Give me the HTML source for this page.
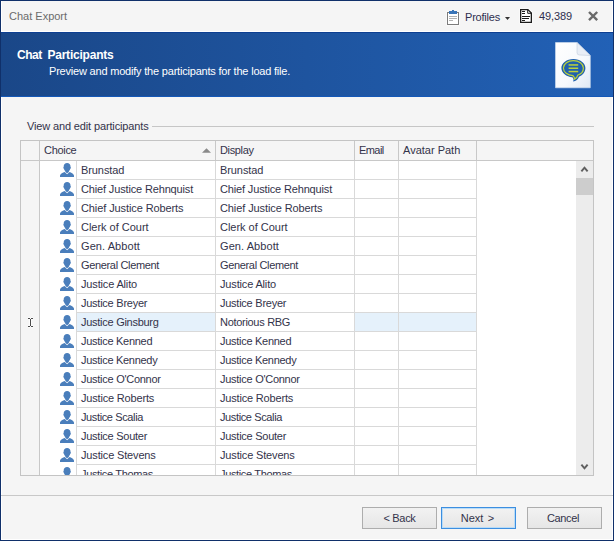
<!DOCTYPE html>
<html><head><meta charset="utf-8"><title>Chat Export</title>
<style>
*{box-sizing:border-box;margin:0;padding:0}
html,body{width:614px;height:541px;overflow:hidden;background:#f5f5f5}
body{position:relative;font-family:"Liberation Sans",Arial,sans-serif;font-size:11px;color:#33334a}
#win{position:absolute;left:0;top:0;width:614px;height:541px;border:1px solid #10306a;background:#f5f5f5;overflow:hidden}
#inner{position:absolute;left:0;top:0;width:612px;height:539px;border:1px solid #fff;border-top:none}
.abs{position:absolute;white-space:nowrap}
#title{left:8px;top:8px;font-size:11px;color:#6b6b6b;letter-spacing:0;line-height:15px}
#banner{position:absolute;left:0;top:31px;width:612px;height:65px;background:linear-gradient(90deg,#1a4788 0%,#2261b6 100%);border-top:1px solid #0d3f92;border-bottom:1px solid #1458b8}
#whiteline{position:absolute;left:0;top:30px;width:612px;height:1px;background:#fff}
#h1{left:16px;top:47px;font-size:12px;font-weight:bold;color:#fff;letter-spacing:-0.22px;line-height:14px}
#h2{left:48px;top:63px;font-size:11px;color:#fff;letter-spacing:-0.2px;line-height:14px}
#grp{left:26px;top:118px;font-size:11px;letter-spacing:-0.14px;line-height:14px;color:#33334a}
#grpline{position:absolute;left:151px;top:125px;width:442px;height:1px;background:#c6c6c6}
#grid{position:absolute;left:19px;top:139px;width:574px;height:336px;border:1px solid #c4c4c4;background:#fff;overflow:hidden}
#hdr{position:absolute;left:0;top:0;width:572px;height:20px;background:#f5f5f5;border-bottom:1px solid #c8c8c8}
.hc{position:absolute;top:0;height:19px;border-right:1px solid #c8c8c8;line-height:19px;padding-left:4px;white-space:nowrap;letter-spacing:-0.3px}
#ind{position:absolute;left:0;top:20px;width:19px;height:320px;background:#f5f5f5;border-right:1px solid #c8c8c8}
.row{position:absolute;left:19px;height:19px;width:437px}
.row .pi{position:absolute;left:20px;top:2px}
.c{position:absolute;top:0;height:19px;border-right:1px solid #d9d9d9;border-bottom:1px solid #d9d9d9;line-height:18px;padding-left:4px;white-space:nowrap;letter-spacing:-0.2px;overflow:hidden}
.c1{left:36px;width:140px;border-left:1px solid #d9d9d9;padding-left:4px}
.c2{left:176px;width:139px}
.c3{left:315px;width:44px}
.c4{left:359px;width:78px}
.sel .c1,.sel .c3,.sel .c4{background:#e5f1fb}
#sb{position:absolute;left:555px;top:20px;width:17px;height:314px;background:#ececec}
#thumb{position:absolute;left:0;top:17px;width:17px;height:17px;background:#cdcdcd}
#sep{position:absolute;left:0;top:494px;width:612px;height:1px;background:#c8c8c8}
.btn{position:absolute;top:506px;width:75px;height:22px;border:1px solid #adadad;background:linear-gradient(#f2f2f2,#e6e6e6);text-align:center;line-height:20px;font-size:11px;color:#33334a;letter-spacing:-0.3px}
#bnext{border-color:#3c8ee0;box-shadow:inset 0 0 0 1px #b9dcf7}
</style></head><body>
<div id="win"><div id="inner"></div>
<div id="title" class="abs">Chat Export</div>

<svg class="abs" style="left:445px;top:8px" width="14" height="17" viewBox="-1 -1 14 17">
<rect x="-0.6" y="1.4" width="13.2" height="14.2" fill="#fff" opacity="0.9"/>
<rect x="0.5" y="2.5" width="11" height="12" fill="#fff" stroke="#7c7c7c"/>
<rect x="2" y="1" width="8" height="3" fill="#3a75b8"/><rect x="5" y="0" width="2" height="1" fill="#3a75b8"/>
<rect x="2" y="6" width="8" height="1" fill="#b2b2b2"/><rect x="2" y="8" width="8" height="1" fill="#b2b2b2"/><rect x="2" y="10" width="4" height="1" fill="#b2b2b2"/>
</svg>
<div class="abs" style="left:464px;top:9px;font-size:11px;letter-spacing:-0.2px;line-height:15px;color:#2e2e4e">Profiles</div>
<svg class="abs" style="left:504px;top:16px" width="5" height="3" viewBox="0 0 5 3"><path d="M0 0H5L2.500 3Z" fill="#333"/></svg>
<svg class="abs" style="left:518px;top:7px" width="14" height="16" viewBox="-1 -1 14 16">
<path d="M-0.500 -0.500H9L12.500 3V14.500H-0.500Z" fill="#fff" opacity="0.9"/>
<path d="M0.650 0.650H7.900L11.350 4.100V13.350H0.650Z" fill="#fff" stroke="#1c1c1c" stroke-width="1.300"/>
<path d="M7.700 0.650V4.300H11.350" fill="none" stroke="#1c1c1c" stroke-width="1"/>
<rect x="2" y="2" width="3" height="1" fill="#1c1c1c"/><rect x="2" y="4" width="3" height="1" fill="#1c1c1c"/>
<rect x="2" y="7" width="8" height="1" fill="#1c1c1c"/><rect x="2" y="9" width="7" height="1" fill="#1c1c1c"/><rect x="2" y="11" width="3" height="1" fill="#1c1c1c"/>
</svg>
<div class="abs" style="left:538px;top:8px;font-size:11px;letter-spacing:-0.1px;line-height:15px;color:#2e2e4e">49,389</div>
<svg class="abs" style="left:586px;top:9px" width="12" height="12" viewBox="0 0 12 12"><path d="M2 2L10.200 10.200M10.200 2L2 10.200" stroke="#6a6a6a" stroke-width="2.400" fill="none"/></svg>

<div id="whiteline"></div>
<div id="banner"></div>
<div id="h1" class="abs" style="word-spacing:-0.3px"><span style="letter-spacing:-0.47px">Chat</span>&nbsp; Participants</div>
<div id="h2" class="abs">Preview and modify the participants for the load file.</div>

<svg class="abs" style="left:553px;top:40px" width="38" height="48" viewBox="0 0 38 48">
<defs><linearGradient id="dg" x1="0" y1="0" x2="1" y2="1"><stop offset="0" stop-color="#ffffff"/><stop offset="0.6" stop-color="#f6f9fd"/><stop offset="1" stop-color="#dfe8f4"/></linearGradient></defs>
<path d="M1.500 1.500H23L36.300 14.500V46.800H1.500Z" fill="url(#dg)" stroke="#d5e0f0" stroke-width="0.600"/>
<path d="M23 1.500V11.500Q23 14 25.500 14L36.300 14.500Z" fill="#e9eef6" stroke="#b9c4d6" stroke-width="0.500"/>
<g transform="translate(0.400,0.900)">
<path d="M19 17C12.300 17 7 21 7 26.200 7 31 12 35 18 35.400 19.200 36.600 19.600 38 18.600 39.600 21.600 39.400 23.800 37.500 24.600 34.800 28.600 33.400 31 30 31 26.200 31 21 25.700 17 19 17Z" fill="#2161ad"/>
<path d="M19 18.700C13.500 18.700 9 22 9 26.200 9 30.300 13.200 33.500 18.600 33.800 19.800 34.800 20.400 36 20.200 37.200 21.800 36.600 22.800 35.200 23.200 33.400 26.800 32.300 29 29.500 29 26.200 29 22 24.500 18.700 19 18.700Z" fill="none" stroke="#bdd23a" stroke-width="1.200"/>
<rect x="14.200" y="22.300" width="9.600" height="1.500" fill="#bdd23a"/><rect x="14.200" y="25.600" width="9.600" height="1.500" fill="#bdd23a"/><rect x="14.200" y="28.900" width="9.600" height="1.500" fill="#bdd23a"/>
</g>
</svg>

<div id="grp" class="abs">View and edit participants</div>
<div id="grpline"></div>

<div id="grid">
 <div id="hdr">
  <div class="hc" style="left:0;width:19px"></div>
  <div class="hc" style="left:19px;width:176px">Choice<svg style="position:absolute;left:162px;top:7px" width="9" height="5" viewBox="0 0 9 5"><path d="M0 4.700L4.500 0.300 9 4.700Z" fill="#8a8a8a"/></svg></div>
  <div class="hc" style="left:195px;width:139px;letter-spacing:-0.35px">Display</div>
  <div class="hc" style="left:334px;width:44px;letter-spacing:-0.58px">Email</div>
  <div class="hc" style="left:378px;width:78px;letter-spacing:0">Avatar Path</div>
 </div>
 <div id="ind"><svg style="position:absolute;left:6px;top:156px" width="7" height="11" viewBox="-1 -1 7 11"><path d="M0 0.500H2M3 0.500H5M0 8.500H2M3 8.500H5M2.500 1V8" stroke="#fff" stroke-width="2.600" fill="none" opacity="0.8"/><path d="M0 0.500H2M3 0.500H5M0 8.500H2M3 8.500H5M2.500 1V8" stroke="#4d4d4d" stroke-width="1" fill="none"/></svg></div>
<div class="row" style="top:20px"><svg class="pi" width="14" height="14" viewBox="0 0 14 14"><path d="M7.100 0C5 0 3.700 1.300 3.700 3.200L3.700 4C3.400 4 3.250 4.400 3.350 4.900 3.450 5.400 3.650 5.650 3.900 5.650 4.100 6.800 4.700 7.600 5.300 8.100L5.300 8.900 7.100 10.300 8.900 8.900 8.900 8.100C9.500 7.600 10.100 6.800 10.300 5.650 10.550 5.650 10.750 5.400 10.850 4.900 10.950 4.400 10.800 4 10.500 4L10.500 3.200C10.500 1.300 9.200 0 7.100 0Z" fill="#4a7ebb"/><path d="M4.600 9.050L7.100 11.150 9.600 9.050C11 9.550 13.600 10.500 14 12.500L14 14 0 14 0 12.500C0.400 10.500 3 9.550 4.600 9.050Z" fill="#4a7ebb"/></svg><div class="c c1"><span style="letter-spacing:-0.09px">Brunstad</span></div><div class="c c2"><span style="letter-spacing:-0.09px">Brunstad</span></div><div class="c c3"></div><div class="c c4"></div></div>
<div class="row" style="top:39px"><svg class="pi" width="14" height="14" viewBox="0 0 14 14"><path d="M7.100 0C5 0 3.700 1.300 3.700 3.200L3.700 4C3.400 4 3.250 4.400 3.350 4.900 3.450 5.400 3.650 5.650 3.900 5.650 4.100 6.800 4.700 7.600 5.300 8.100L5.300 8.900 7.100 10.300 8.900 8.900 8.900 8.100C9.500 7.600 10.100 6.800 10.300 5.650 10.550 5.650 10.750 5.400 10.850 4.900 10.950 4.400 10.800 4 10.500 4L10.500 3.200C10.500 1.300 9.200 0 7.100 0Z" fill="#4a7ebb"/><path d="M4.600 9.050L7.100 11.150 9.600 9.050C11 9.550 13.600 10.500 14 12.500L14 14 0 14 0 12.500C0.400 10.500 3 9.550 4.600 9.050Z" fill="#4a7ebb"/></svg><div class="c c1"><span style="letter-spacing:-0.15px">Chief Justice Rehnquist</span></div><div class="c c2"><span style="letter-spacing:-0.15px">Chief Justice Rehnquist</span></div><div class="c c3"></div><div class="c c4"></div></div>
<div class="row" style="top:58px"><svg class="pi" width="14" height="14" viewBox="0 0 14 14"><path d="M7.100 0C5 0 3.700 1.300 3.700 3.200L3.700 4C3.400 4 3.250 4.400 3.350 4.900 3.450 5.400 3.650 5.650 3.900 5.650 4.100 6.800 4.700 7.600 5.300 8.100L5.300 8.900 7.100 10.300 8.900 8.900 8.900 8.100C9.500 7.600 10.100 6.800 10.300 5.650 10.550 5.650 10.750 5.400 10.850 4.900 10.950 4.400 10.800 4 10.500 4L10.500 3.200C10.500 1.300 9.200 0 7.100 0Z" fill="#4a7ebb"/><path d="M4.600 9.050L7.100 11.150 9.600 9.050C11 9.550 13.600 10.500 14 12.500L14 14 0 14 0 12.500C0.400 10.500 3 9.550 4.600 9.050Z" fill="#4a7ebb"/></svg><div class="c c1"><span style="letter-spacing:-0.1px">Chief Justice Roberts</span></div><div class="c c2"><span style="letter-spacing:-0.1px">Chief Justice Roberts</span></div><div class="c c3"></div><div class="c c4"></div></div>
<div class="row" style="top:77px"><svg class="pi" width="14" height="14" viewBox="0 0 14 14"><path d="M7.100 0C5 0 3.700 1.300 3.700 3.200L3.700 4C3.400 4 3.250 4.400 3.350 4.900 3.450 5.400 3.650 5.650 3.900 5.650 4.100 6.800 4.700 7.600 5.300 8.100L5.300 8.900 7.100 10.300 8.900 8.900 8.900 8.100C9.500 7.600 10.100 6.800 10.300 5.650 10.550 5.650 10.750 5.400 10.850 4.900 10.950 4.400 10.800 4 10.500 4L10.500 3.200C10.500 1.300 9.200 0 7.100 0Z" fill="#4a7ebb"/><path d="M4.600 9.050L7.100 11.150 9.600 9.050C11 9.550 13.600 10.500 14 12.500L14 14 0 14 0 12.500C0.400 10.500 3 9.550 4.600 9.050Z" fill="#4a7ebb"/></svg><div class="c c1"><span style="letter-spacing:-0.02px">Clerk of Court</span></div><div class="c c2"><span style="letter-spacing:-0.02px">Clerk of Court</span></div><div class="c c3"></div><div class="c c4"></div></div>
<div class="row" style="top:96px"><svg class="pi" width="14" height="14" viewBox="0 0 14 14"><path d="M7.100 0C5 0 3.700 1.300 3.700 3.200L3.700 4C3.400 4 3.250 4.400 3.350 4.900 3.450 5.400 3.650 5.650 3.900 5.650 4.100 6.800 4.700 7.600 5.300 8.100L5.300 8.900 7.100 10.300 8.900 8.900 8.900 8.100C9.500 7.600 10.100 6.800 10.300 5.650 10.550 5.650 10.750 5.400 10.850 4.900 10.950 4.400 10.800 4 10.500 4L10.500 3.200C10.500 1.300 9.200 0 7.100 0Z" fill="#4a7ebb"/><path d="M4.600 9.050L7.100 11.150 9.600 9.050C11 9.550 13.600 10.500 14 12.500L14 14 0 14 0 12.500C0.400 10.500 3 9.550 4.600 9.050Z" fill="#4a7ebb"/></svg><div class="c c1"><span style="letter-spacing:0.08px">Gen. Abbott</span></div><div class="c c2"><span style="letter-spacing:0.08px">Gen. Abbott</span></div><div class="c c3"></div><div class="c c4"></div></div>
<div class="row" style="top:115px"><svg class="pi" width="14" height="14" viewBox="0 0 14 14"><path d="M7.100 0C5 0 3.700 1.300 3.700 3.200L3.700 4C3.400 4 3.250 4.400 3.350 4.900 3.450 5.400 3.650 5.650 3.900 5.650 4.100 6.800 4.700 7.600 5.300 8.100L5.300 8.900 7.100 10.300 8.900 8.900 8.900 8.100C9.500 7.600 10.100 6.800 10.300 5.650 10.550 5.650 10.750 5.400 10.850 4.900 10.950 4.400 10.800 4 10.500 4L10.500 3.200C10.500 1.300 9.200 0 7.100 0Z" fill="#4a7ebb"/><path d="M4.600 9.050L7.100 11.150 9.600 9.050C11 9.550 13.600 10.500 14 12.500L14 14 0 14 0 12.500C0.400 10.500 3 9.550 4.600 9.050Z" fill="#4a7ebb"/></svg><div class="c c1"><span style="letter-spacing:-0.34px">General Clement</span></div><div class="c c2"><span style="letter-spacing:-0.34px">General Clement</span></div><div class="c c3"></div><div class="c c4"></div></div>
<div class="row" style="top:134px"><svg class="pi" width="14" height="14" viewBox="0 0 14 14"><path d="M7.100 0C5 0 3.700 1.300 3.700 3.200L3.700 4C3.400 4 3.250 4.400 3.350 4.900 3.450 5.400 3.650 5.650 3.900 5.650 4.100 6.800 4.700 7.600 5.300 8.100L5.300 8.900 7.100 10.300 8.900 8.900 8.900 8.100C9.500 7.600 10.100 6.800 10.300 5.650 10.550 5.650 10.750 5.400 10.850 4.900 10.950 4.400 10.800 4 10.500 4L10.500 3.200C10.500 1.300 9.200 0 7.100 0Z" fill="#4a7ebb"/><path d="M4.600 9.050L7.100 11.150 9.600 9.050C11 9.550 13.600 10.500 14 12.500L14 14 0 14 0 12.500C0.400 10.500 3 9.550 4.600 9.050Z" fill="#4a7ebb"/></svg><div class="c c1"><span style="letter-spacing:-0.16px">Justice Alito</span></div><div class="c c2"><span style="letter-spacing:-0.16px">Justice Alito</span></div><div class="c c3"></div><div class="c c4"></div></div>
<div class="row" style="top:153px"><svg class="pi" width="14" height="14" viewBox="0 0 14 14"><path d="M7.100 0C5 0 3.700 1.300 3.700 3.200L3.700 4C3.400 4 3.250 4.400 3.350 4.900 3.450 5.400 3.650 5.650 3.900 5.650 4.100 6.800 4.700 7.600 5.300 8.100L5.300 8.900 7.100 10.300 8.900 8.900 8.900 8.100C9.500 7.600 10.100 6.800 10.300 5.650 10.550 5.650 10.750 5.400 10.850 4.900 10.950 4.400 10.800 4 10.500 4L10.500 3.200C10.500 1.300 9.200 0 7.100 0Z" fill="#4a7ebb"/><path d="M4.600 9.050L7.100 11.150 9.600 9.050C11 9.550 13.600 10.500 14 12.500L14 14 0 14 0 12.500C0.400 10.500 3 9.550 4.600 9.050Z" fill="#4a7ebb"/></svg><div class="c c1"><span style="letter-spacing:-0.25px">Justice Breyer</span></div><div class="c c2"><span style="letter-spacing:-0.25px">Justice Breyer</span></div><div class="c c3"></div><div class="c c4"></div></div>
<div class="row sel" style="top:172px"><svg class="pi" width="14" height="14" viewBox="0 0 14 14"><path d="M7.100 0C5 0 3.700 1.300 3.700 3.200L3.700 4C3.400 4 3.250 4.400 3.350 4.900 3.450 5.400 3.650 5.650 3.900 5.650 4.100 6.800 4.700 7.600 5.300 8.100L5.300 8.900 7.100 10.300 8.900 8.900 8.900 8.100C9.500 7.600 10.100 6.800 10.300 5.650 10.550 5.650 10.750 5.400 10.850 4.900 10.950 4.400 10.800 4 10.500 4L10.500 3.200C10.500 1.300 9.200 0 7.100 0Z" fill="#4a7ebb"/><path d="M4.600 9.050L7.100 11.150 9.600 9.050C11 9.550 13.600 10.500 14 12.500L14 14 0 14 0 12.500C0.400 10.500 3 9.550 4.600 9.050Z" fill="#4a7ebb"/></svg><div class="c c1"><span style="letter-spacing:-0.27px">Justice Ginsburg</span></div><div class="c c2"><span style="letter-spacing:-0.3px">Notorious RBG</span></div><div class="c c3"></div><div class="c c4"></div></div>
<div class="row" style="top:191px"><svg class="pi" width="14" height="14" viewBox="0 0 14 14"><path d="M7.100 0C5 0 3.700 1.300 3.700 3.200L3.700 4C3.400 4 3.250 4.400 3.350 4.900 3.450 5.400 3.650 5.650 3.900 5.650 4.100 6.800 4.700 7.600 5.300 8.100L5.300 8.900 7.100 10.300 8.900 8.900 8.900 8.100C9.500 7.600 10.100 6.800 10.300 5.650 10.550 5.650 10.750 5.400 10.850 4.900 10.950 4.400 10.800 4 10.500 4L10.500 3.200C10.500 1.300 9.200 0 7.100 0Z" fill="#4a7ebb"/><path d="M4.600 9.050L7.100 11.150 9.600 9.050C11 9.550 13.600 10.500 14 12.500L14 14 0 14 0 12.500C0.400 10.500 3 9.550 4.600 9.050Z" fill="#4a7ebb"/></svg><div class="c c1"><span style="letter-spacing:-0.28px">Justice Kenned</span></div><div class="c c2"><span style="letter-spacing:-0.28px">Justice Kenned</span></div><div class="c c3"></div><div class="c c4"></div></div>
<div class="row" style="top:210px"><svg class="pi" width="14" height="14" viewBox="0 0 14 14"><path d="M7.100 0C5 0 3.700 1.300 3.700 3.200L3.700 4C3.400 4 3.250 4.400 3.350 4.900 3.450 5.400 3.650 5.650 3.900 5.650 4.100 6.800 4.700 7.600 5.300 8.100L5.300 8.900 7.100 10.300 8.900 8.900 8.900 8.100C9.500 7.600 10.100 6.800 10.300 5.650 10.550 5.650 10.750 5.400 10.850 4.900 10.950 4.400 10.800 4 10.500 4L10.500 3.200C10.500 1.300 9.200 0 7.100 0Z" fill="#4a7ebb"/><path d="M4.600 9.050L7.100 11.150 9.600 9.050C11 9.550 13.600 10.500 14 12.500L14 14 0 14 0 12.500C0.400 10.500 3 9.550 4.600 9.050Z" fill="#4a7ebb"/></svg><div class="c c1"><span style="letter-spacing:-0.29px">Justice Kennedy</span></div><div class="c c2"><span style="letter-spacing:-0.29px">Justice Kennedy</span></div><div class="c c3"></div><div class="c c4"></div></div>
<div class="row" style="top:229px"><svg class="pi" width="14" height="14" viewBox="0 0 14 14"><path d="M7.100 0C5 0 3.700 1.300 3.700 3.200L3.700 4C3.400 4 3.250 4.400 3.350 4.900 3.450 5.400 3.650 5.650 3.900 5.650 4.100 6.800 4.700 7.600 5.300 8.100L5.300 8.900 7.100 10.300 8.900 8.900 8.900 8.100C9.500 7.600 10.100 6.800 10.300 5.650 10.550 5.650 10.750 5.400 10.850 4.900 10.950 4.400 10.800 4 10.500 4L10.500 3.200C10.500 1.300 9.200 0 7.100 0Z" fill="#4a7ebb"/><path d="M4.600 9.050L7.100 11.150 9.600 9.050C11 9.550 13.600 10.500 14 12.500L14 14 0 14 0 12.500C0.400 10.500 3 9.550 4.600 9.050Z" fill="#4a7ebb"/></svg><div class="c c1"><span style="letter-spacing:-0.27px">Justice O'Connor</span></div><div class="c c2"><span style="letter-spacing:-0.27px">Justice O'Connor</span></div><div class="c c3"></div><div class="c c4"></div></div>
<div class="row" style="top:248px"><svg class="pi" width="14" height="14" viewBox="0 0 14 14"><path d="M7.100 0C5 0 3.700 1.300 3.700 3.200L3.700 4C3.400 4 3.250 4.400 3.350 4.900 3.450 5.400 3.650 5.650 3.900 5.650 4.100 6.800 4.700 7.600 5.300 8.100L5.300 8.900 7.100 10.300 8.900 8.900 8.900 8.100C9.500 7.600 10.100 6.800 10.300 5.650 10.550 5.650 10.750 5.400 10.850 4.900 10.950 4.400 10.800 4 10.500 4L10.500 3.200C10.500 1.300 9.200 0 7.100 0Z" fill="#4a7ebb"/><path d="M4.600 9.050L7.100 11.150 9.600 9.050C11 9.550 13.600 10.500 14 12.500L14 14 0 14 0 12.500C0.400 10.500 3 9.550 4.600 9.050Z" fill="#4a7ebb"/></svg><div class="c c1"><span style="letter-spacing:-0.18px">Justice Roberts</span></div><div class="c c2"><span style="letter-spacing:-0.18px">Justice Roberts</span></div><div class="c c3"></div><div class="c c4"></div></div>
<div class="row" style="top:267px"><svg class="pi" width="14" height="14" viewBox="0 0 14 14"><path d="M7.100 0C5 0 3.700 1.300 3.700 3.200L3.700 4C3.400 4 3.250 4.400 3.350 4.900 3.450 5.400 3.650 5.650 3.900 5.650 4.100 6.800 4.700 7.600 5.300 8.100L5.300 8.900 7.100 10.300 8.900 8.900 8.900 8.100C9.500 7.600 10.100 6.800 10.300 5.650 10.550 5.650 10.750 5.400 10.850 4.900 10.950 4.400 10.800 4 10.500 4L10.500 3.200C10.500 1.300 9.200 0 7.100 0Z" fill="#4a7ebb"/><path d="M4.600 9.050L7.100 11.150 9.600 9.050C11 9.550 13.600 10.500 14 12.500L14 14 0 14 0 12.500C0.400 10.500 3 9.550 4.600 9.050Z" fill="#4a7ebb"/></svg><div class="c c1"><span style="letter-spacing:-0.38px">Justice Scalia</span></div><div class="c c2"><span style="letter-spacing:-0.38px">Justice Scalia</span></div><div class="c c3"></div><div class="c c4"></div></div>
<div class="row" style="top:286px"><svg class="pi" width="14" height="14" viewBox="0 0 14 14"><path d="M7.100 0C5 0 3.700 1.300 3.700 3.200L3.700 4C3.400 4 3.250 4.400 3.350 4.900 3.450 5.400 3.650 5.650 3.900 5.650 4.100 6.800 4.700 7.600 5.300 8.100L5.300 8.900 7.100 10.300 8.900 8.900 8.900 8.100C9.500 7.600 10.100 6.800 10.300 5.650 10.550 5.650 10.750 5.400 10.850 4.900 10.950 4.400 10.800 4 10.500 4L10.500 3.200C10.500 1.300 9.200 0 7.100 0Z" fill="#4a7ebb"/><path d="M4.600 9.050L7.100 11.150 9.600 9.050C11 9.550 13.600 10.500 14 12.500L14 14 0 14 0 12.500C0.400 10.500 3 9.550 4.600 9.050Z" fill="#4a7ebb"/></svg><div class="c c1"><span style="letter-spacing:-0.26px">Justice Souter</span></div><div class="c c2"><span style="letter-spacing:-0.26px">Justice Souter</span></div><div class="c c3"></div><div class="c c4"></div></div>
<div class="row" style="top:305px"><svg class="pi" width="14" height="14" viewBox="0 0 14 14"><path d="M7.100 0C5 0 3.700 1.300 3.700 3.200L3.700 4C3.400 4 3.250 4.400 3.350 4.900 3.450 5.400 3.650 5.650 3.900 5.650 4.100 6.800 4.700 7.600 5.300 8.100L5.300 8.900 7.100 10.300 8.900 8.900 8.900 8.100C9.500 7.600 10.100 6.800 10.300 5.650 10.550 5.650 10.750 5.400 10.850 4.900 10.950 4.400 10.800 4 10.500 4L10.500 3.200C10.500 1.300 9.200 0 7.100 0Z" fill="#4a7ebb"/><path d="M4.600 9.050L7.100 11.150 9.600 9.050C11 9.550 13.600 10.500 14 12.500L14 14 0 14 0 12.500C0.400 10.500 3 9.550 4.600 9.050Z" fill="#4a7ebb"/></svg><div class="c c1"><span style="letter-spacing:-0.16px">Justice Stevens</span></div><div class="c c2"><span style="letter-spacing:-0.16px">Justice Stevens</span></div><div class="c c3"></div><div class="c c4"></div></div>
<div class="row" style="top:324px"><svg class="pi" width="14" height="14" viewBox="0 0 14 14"><path d="M7.100 0C5 0 3.700 1.300 3.700 3.200L3.700 4C3.400 4 3.250 4.400 3.350 4.900 3.450 5.400 3.650 5.650 3.900 5.650 4.100 6.800 4.700 7.600 5.300 8.100L5.300 8.900 7.100 10.300 8.900 8.900 8.900 8.100C9.500 7.600 10.100 6.800 10.300 5.650 10.550 5.650 10.750 5.400 10.850 4.900 10.950 4.400 10.800 4 10.500 4L10.500 3.200C10.500 1.300 9.200 0 7.100 0Z" fill="#4a7ebb"/><path d="M4.600 9.050L7.100 11.150 9.600 9.050C11 9.550 13.600 10.500 14 12.500L14 14 0 14 0 12.500C0.400 10.500 3 9.550 4.600 9.050Z" fill="#4a7ebb"/></svg><div class="c c1"><span style="letter-spacing:-0.35px">Justice Thomas</span></div><div class="c c2"><span style="letter-spacing:-0.35px">Justice Thomas</span></div><div class="c c3"></div><div class="c c4"></div></div>
 <div id="sb"><div id="thumb"></div>
  <svg style="position:absolute;left:4px;top:5px" width="9" height="7" viewBox="0 0 9 7"><path d="M1.400 5.300L4.500 1.700 7.600 5.300" stroke="#5f5f5f" stroke-width="2" fill="none"/></svg>
  <svg style="position:absolute;left:4px;top:302px" width="9" height="7" viewBox="0 0 9 7"><path d="M1.400 1.700L4.500 5.300 7.600 1.700" stroke="#5f5f5f" stroke-width="2" fill="none"/></svg>
 </div>
</div>

<div id="sep"></div>
<div class="btn" style="left:361px">&lt; Back</div>
<div class="btn" id="bnext" style="left:440px;letter-spacing:0;word-spacing:1.5px;padding-right:2px">Next &gt;</div>
<div class="btn" style="left:526px;padding-right:3px;letter-spacing:-0.4px">Cancel</div>
</div>
</body></html>
